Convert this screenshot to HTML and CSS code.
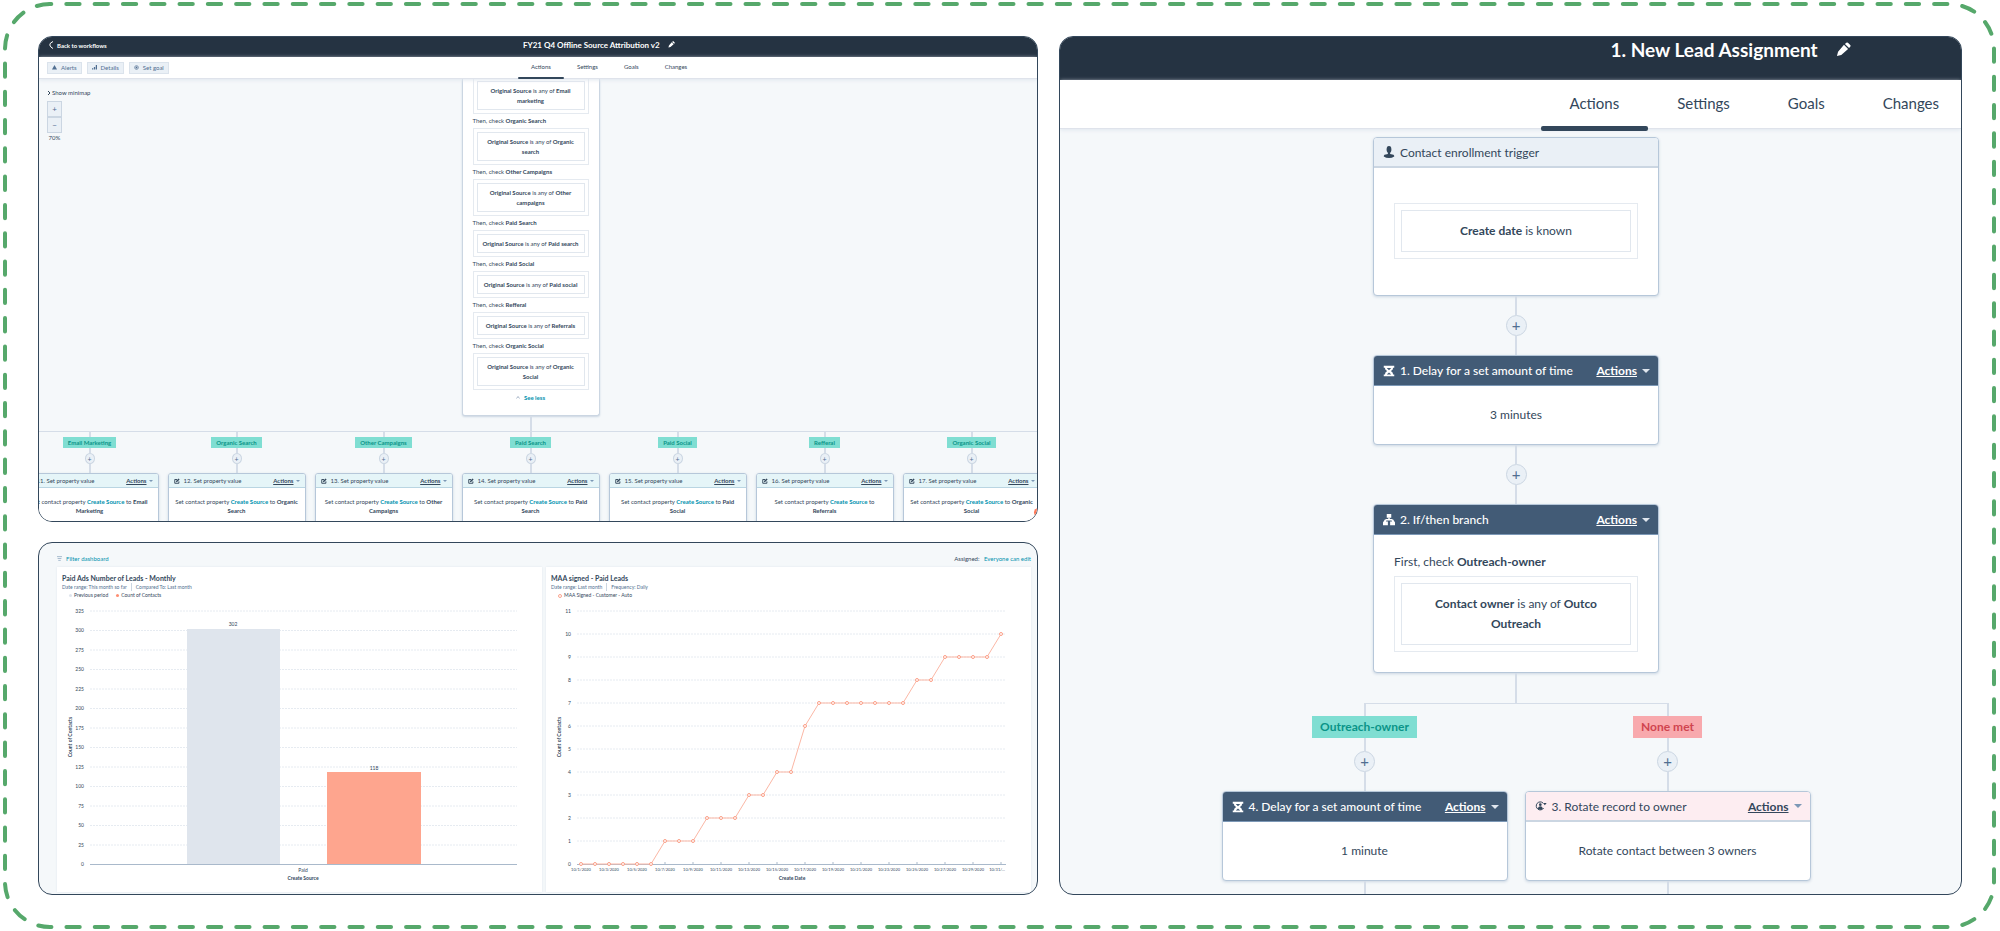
FILE: index.html
```html
<!DOCTYPE html>
<html lang="en">
<head>
<meta charset="utf-8">
<title>Workflow and dashboard overview</title>
<link rel="stylesheet" href="styles.css">
</head>
<body>
<svg class="frame" aria-hidden="true"><rect x="5" y="4" rx="45" ry="45"/></svg>

<svg class="defs" aria-hidden="true">
  <symbol id="pencil" viewBox="0 0 16 16"><path d="M1 15l1.200-4.600L8.500 3l4.400 4.400-7.300 6.400zM9.500 2L11 .8q.8-.8 1.700 0l2.500 2.500q.8.9 0 1.700L13.900 6.400z"/></symbol>
  <symbol id="edit" viewBox="0 0 16 16"><path d="M13 9v5H2V4h6" fill="none" stroke="currentColor" stroke-width="2.500"/><path d="M5 11l1-4 6-6 3 3-6 6z"/></symbol>
  <symbol id="hourglass" viewBox="0 0 16 16"><path d="M1 1h14v2.500h-1.500Q13.500 6.500 10.500 8q3 1.500 3 4.500H15V15H1v-2.500h1.500q0-3 3-4.500-3-1.500-3-4.500H1z"/><path d="M5 4h6L8 7zM5 12.500L8 10l3 2.500z" fill="#425b76"/></symbol>
  <symbol id="branch" viewBox="0 0 16 16"><rect x="5" y="0" width="6" height="5"/><path d="M7 5h2v1.500h2.500q3 0 3.500 3.500 1 0 1 1.500V15H9.500v-5H12l-.5-1.500h-7L4 10h2.500v5H0v-3.500Q0 10 1 10q.5-3.500 3.500-3.500H7z"/></symbol>
  <symbol id="contact" viewBox="0 0 16 16"><ellipse cx="8" cy="4.500" rx="3.200" ry="4.500"/><path d="M6.500 8h3v2.500l4.500 1q1 .5 1 2.500-3 2-7 2t-7-2q0-2 1-2.500l4.500-1z"/></symbol>
  <symbol id="rotate" viewBox="0 0 18 16"><path d="M13 11a6 6 0 1 1-1-7.500" fill="none" stroke="currentColor" stroke-width="1.500"/><circle cx="8" cy="6" r="2"/><path d="M4.500 12.500q0-4 3.500-4t3.500 4q-3.500 2-7 0zM12 3.500h5.500L14.800 7z"/></symbol>
</svg>

<main class="board">
  <section class="panel flow-small">
    <header class="topbar">
      <a class="back" href="#"><svg viewBox="0 0 5 8"><path d="M4 .5Q.5 2 .8 4T4 7.500"/></svg>Back to workflows</a>
      <h1 class="title">FY21 Q4 Offline Source Attribution v2 <svg class="icon"><use href="#pencil"/></svg></h1>
    </header>
    <div class="toolbar">
      <div class="tools">
        <button><svg viewBox="0 0 8 8"><path d="M4 0l4 7H0z"/></svg>Alerts</button>
        <button><svg viewBox="0 0 8 8"><path d="M0 7V5h2v2zM3 7V3h2v4zM6 7V0h2v7z"/></svg>Details</button>
        <button><svg viewBox="0 0 8 8"><circle cx="4" cy="4" r="3" fill="none" stroke="currentColor"/><circle cx="4" cy="4" r="1.500"/></svg>Set goal</button>
      </div>
      <nav class="tabs"><a class="on" href="#">Actions</a><a href="#">Settings</a><a href="#">Goals</a><a href="#">Changes</a></nav>
    </div>
    <div class="canvas">
      <div class="mapctl">
        <a class="minimap" href="#"><svg viewBox="0 0 4 6"><path d="M1 1l2 2-2 2"/></svg>Show minimap</a>
        <button aria-label="Zoom in">+</button><button aria-label="Zoom out">−</button>
        <span class="pct">70%</span>
      </div>
      <article class="checks">
        <div class="box cut"><p><b>Original Source</b> is any of <b>Email marketing</b></p></div>
        <h2>Then, check <b>Organic Search</b></h2>
        <div class="box"><p><b>Original Source</b> is any of <b>Organic search</b></p></div>
        <h2>Then, check <b>Other Campaigns</b></h2>
        <div class="box"><p><b>Original Source</b> is any of <b>Other campaigns</b></p></div>
        <h2>Then, check <b>Paid Search</b></h2>
        <div class="box"><p><b>Original Source</b> is any of <b>Paid search</b></p></div>
        <h2>Then, check <b>Paid Social</b></h2>
        <div class="box"><p><b>Original Source</b> is any of <b>Paid social</b></p></div>
        <h2>Then, check <b>Refferal</b></h2>
        <div class="box"><p><b>Original Source</b> is any of <b>Referrals</b></p></div>
        <h2>Then, check <b>Organic Social</b></h2>
        <div class="box"><p><b>Original Source</b> is any of <b>Organic<br>Social</b></p></div>
        <a class="less" href="#"><svg viewBox="0 0 8 6"><path d="M1 5l3-4 3 4"/></svg>See less</a>
      </article>
      <div class="stem"></div>
      <div class="rail"></div>
      <div class="branches">
        <div class="branch"><i></i><span class="tag">Email Marketing</span><i></i><button class="plus" aria-label="Add action">+</button><i class="long"></i>
          <article class="step"><header><svg class="icon"><use href="#edit"/></svg><span>11. Set property value</span><button>Actions</button></header><p>Set contact property <a href="#">Create Source</a> to <b>Email<br>Marketing</b></p></article></div>
        <div class="branch"><i></i><span class="tag">Organic Search</span><i></i><button class="plus" aria-label="Add action">+</button><i class="long"></i>
          <article class="step"><header><svg class="icon"><use href="#edit"/></svg><span>12. Set property value</span><button>Actions</button></header><p>Set contact property <a href="#">Create Source</a> to <b>Organic<br>Search</b></p></article></div>
        <div class="branch"><i></i><span class="tag">Other Campaigns</span><i></i><button class="plus" aria-label="Add action">+</button><i class="long"></i>
          <article class="step"><header><svg class="icon"><use href="#edit"/></svg><span>13. Set property value</span><button>Actions</button></header><p>Set contact property <a href="#">Create Source</a> to <b>Other<br>Campaigns</b></p></article></div>
        <div class="branch"><i></i><span class="tag">Paid Search</span><i></i><button class="plus" aria-label="Add action">+</button><i class="long"></i>
          <article class="step"><header><svg class="icon"><use href="#edit"/></svg><span>14. Set property value</span><button>Actions</button></header><p>Set contact property <a href="#">Create Source</a> to <b>Paid<br>Search</b></p></article></div>
        <div class="branch"><i></i><span class="tag">Paid Social</span><i></i><button class="plus" aria-label="Add action">+</button><i class="long"></i>
          <article class="step"><header><svg class="icon"><use href="#edit"/></svg><span>15. Set property value</span><button>Actions</button></header><p>Set contact property <a href="#">Create Source</a> to <b>Paid<br>Social</b></p></article></div>
        <div class="branch"><i></i><span class="tag">Refferal</span><i></i><button class="plus" aria-label="Add action">+</button><i class="long"></i>
          <article class="step"><header><svg class="icon"><use href="#edit"/></svg><span>16. Set property value</span><button>Actions</button></header><p>Set contact property <a href="#">Create Source</a> to<br><b>Referrals</b></p></article></div>
        <div class="branch"><i></i><span class="tag">Organic Social</span><i></i><button class="plus" aria-label="Add action">+</button><i class="long"></i>
          <article class="step"><header><svg class="icon"><use href="#edit"/></svg><span>17. Set property value</span><button>Actions</button></header><p>Set contact property <a href="#">Create Source</a> to <b>Organic<br>Social</b></p></article></div>
      </div>
      <button class="help" aria-label="Help"></button>
    </div>
  </section>

  <section class="panel dashboard">
    <div class="dashbar">
      <a href="#"><svg viewBox="0 0 8 8"><path d="M0 1h8M1 4h6M2 7h4"/></svg>Filter dashboard</a>
      <span>Assigned: <a href="#">Everyone can edit</a></span>
    </div>
    <div class="reports">
      <article class="report">
        <h2>Paid Ads Number of Leads - Monthly</h2>
        <p class="meta"><span>Date range: This month so far</span><span>Compared To: Last month</span></p>
        <p class="legend"><span class="dot grey">Previous period</span><span class="dot coral">Count of Contacts</span></p>
        <svg class="chart" viewBox="0 0 485 290" role="img" aria-label="Count of contacts by create source">
          <path class="grid" d="M33 11H460M33 30.500H460M33 50H460M33 69.500H460M33 89H460M33 108.500H460M33 128H460M33 147.500H460M33 167H460M33 186.500H460M33 206H460M33 225.500H460M33 245H460"/>
          <rect x="130" y="29" width="93" height="235" fill="#dfe5ed"/>
          <rect x="270" y="172" width="94" height="92" fill="#fea58e"/>
          <path class="axis" d="M33 264.500H460"/>
          <g class="ylab"><text x="27" y="13">325</text><text x="27" y="32">300</text><text x="27" y="52">275</text><text x="27" y="71">250</text><text x="27" y="91">225</text><text x="27" y="110">200</text><text x="27" y="130">175</text><text x="27" y="149">150</text><text x="27" y="169">125</text><text x="27" y="188">100</text><text x="27" y="208">75</text><text x="27" y="227">50</text><text x="27" y="247">25</text><text x="27" y="266">0</text></g>
          <g class="mid"><text x="176" y="26">302</text><text x="317" y="170">118</text><text x="246" y="272">Paid</text><text class="name" x="246" y="280">Create Source</text><text class="name" transform="translate(15 137) rotate(-90)">Count of Contacts</text></g>
        </svg>
      </article>
      <article class="report">
        <h2>MAA signed - Paid Leads</h2>
        <p class="meta"><span>Date range: Last month</span><span>Frequency: Daily</span></p>
        <p class="legend"><span class="dot ring">MAA Signed - Customer - Auto</span></p>
        <svg class="chart" viewBox="0 0 485 290" role="img" aria-label="Count of contacts by create date">
          <defs><marker id="pt" markerUnits="userSpaceOnUse" markerWidth="6" markerHeight="6" refX="3" refY="3"><circle cx="3" cy="3" r="1.500" fill="#fff" stroke="#fb9f87"/></marker></defs>
          <path class="grid" d="M31 11H460M31 34H460M31 57H460M31 80H460M31 103H460M31 126H460M31 149H460M31 172H460M31 195H460M31 218H460M31 241H460"/>
          <path class="axis" d="M31 264.500H460M63 264v-2M91 264v-2M119 264v-2M147 264v-2M175 264v-2M203 264v-2M231 264v-2M259 264v-2M287 264v-2M315 264v-2M343 264v-2M371 264v-2M399 264v-2M427 264v-2M455 264v-2"/>
          <polyline class="line" points="35,264 49,264 63,264 77,264 91,264 105,264 119,241 133,241 147,241 161,218 175,218 189,218 203,195 217,195 231,172 245,172 259,126 273,103 287,103 301,103 315,103 329,103 343,103 357,103 371,80 385,80 399,57 413,57 427,57 441,57 455,34"/>
          <g class="ylab"><text x="25" y="13">11</text><text x="25" y="36">10</text><text x="25" y="59">9</text><text x="25" y="82">8</text><text x="25" y="105">7</text><text x="25" y="128">6</text><text x="25" y="151">5</text><text x="25" y="174">4</text><text x="25" y="197">3</text><text x="25" y="220">2</text><text x="25" y="243">1</text><text x="25" y="266">0</text></g>
          <g class="mid date"><text x="35" y="271">10/1/2020</text><text x="63" y="271">10/3/2020</text><text x="91" y="271">10/5/2020</text><text x="119" y="271">10/7/2020</text><text x="147" y="271">10/9/2020</text><text x="175" y="271">10/11/2020</text><text x="203" y="271">10/13/2020</text><text x="231" y="271">10/15/2020</text><text x="259" y="271">10/17/2020</text><text x="287" y="271">10/19/2020</text><text x="315" y="271">10/21/2020</text><text x="343" y="271">10/23/2020</text><text x="371" y="271">10/25/2020</text><text x="399" y="271">10/27/2020</text><text x="427" y="271">10/29/2020</text><text x="451" y="271">10/31/...</text></g>
          <g class="mid"><text class="name" x="246" y="280">Create Date</text><text class="name" transform="translate(15 137) rotate(-90)">Count of Contacts</text></g>
        </svg>
      </article>
    </div>
  </section>

  <section class="panel flow-large">
    <header class="topbar"><h1 class="title">1. New Lead Assignment <svg class="icon"><use href="#pencil"/></svg></h1></header>
    <div class="toolbar"><nav class="tabs"><a class="on" href="#">Actions</a><a href="#">Settings</a><a href="#">Goals</a><a href="#">Changes</a></nav></div>
    <div class="canvas">
      <article class="step trigger"><header><svg class="icon"><use href="#contact"/></svg><span>Contact enrollment trigger</span></header>
        <div class="box"><p><b>Create date</b> is known</p></div></article>
      <i class="long"></i><button class="plus" aria-label="Add action">+</button><i class="long"></i>
      <article class="step dark"><header><svg class="icon"><use href="#hourglass"/></svg><span>1. Delay for a set amount of time</span><button>Actions</button></header><p>3 minutes</p></article>
      <i class="long"></i><button class="plus" aria-label="Add action">+</button><i class="long"></i>
      <article class="step dark cond"><header><svg class="icon"><use href="#branch"/></svg><span>2. If/then branch</span><button>Actions</button></header>
        <h2>First, check <b>Outreach-owner</b></h2>
        <div class="box"><p><b>Contact owner</b> is any of <b>Outco Outreach</b></p></div></article>
      <div class="stem"></div>
      <div class="rail"></div>
      <div class="branches">
        <div class="branch"><i></i><span class="tag">Outreach-owner</span><i></i><button class="plus" aria-label="Add action">+</button><i class="long"></i>
          <article class="step dark"><header><svg class="icon"><use href="#hourglass"/></svg><span>4. Delay for a set amount of time</span><button>Actions</button></header><p>1 minute</p></article><i class="long"></i></div>
        <div class="branch"><i></i><span class="tag red">None met</span><i></i><button class="plus" aria-label="Add action">+</button><i class="long"></i>
          <article class="step pink"><header><svg class="icon"><use href="#rotate"/></svg><span>3. Rotate record to owner</span><button>Actions</button></header><p>Rotate contact between 3 owners</p></article><i class="long"></i></div>
      </div>
    </div>
  </section>
</main>
</body>
</html>
```
FILE: styles.css
```css
*, *::before, *::after { box-sizing: border-box; }
body, h1, h2, p { margin: 0; }
body { background: #fff; color: #33475b; font-family: Lato, "Open Sans", sans-serif; }
button { font: inherit; color: inherit; padding: 0; margin: 0; border: 0; background: none; cursor: pointer; }
a { color: inherit; text-decoration: none; }
b { font-weight: 700; }
svg { fill: currentColor; }
.defs { position: absolute; width: 0; height: 0; }

.frame { position: absolute; inset: 0; width: 100%; height: 100%; pointer-events: none; }
.frame rect { width: calc(100% - 11px); height: calc(100% - 8px); fill: none; stroke: #56a86b; stroke-width: 4; stroke-linecap: round; stroke-dasharray: 13.3 15; stroke-dashoffset: 12; }

.board { height: 100vh; padding: 36px 38px; display: grid; grid-template-columns: 1000fr 903fr; grid-template-rows: 486fr 353fr; gap: 20px 21px; }
.panel { border: 1px solid #33475b; border-radius: 14px; overflow: hidden; background: #f5f8fa; display: flex; flex-direction: column; min-width: 0; min-height: 0; }
.flow-large { grid-column: 2; grid-row: 1 / 3; }

/* Workflow editor */
.topbar { background: #253342; color: #fff; display: grid; flex: none; }
.title { font-weight: 700; white-space: nowrap; }
.toolbar { background: #fff; display: grid; flex: none; border-bottom: 1px solid #dfe3eb; box-shadow: 0 1px 4px #dfe6ee; position: relative; z-index: 1; }
.tabs { display: flex; }
.tabs .on { position: relative; }
.tabs .on::after { content: ""; position: absolute; left: 0; right: 0; background: #33475b; border-radius: 2px; }
.canvas { flex: 1; min-height: 0; overflow: hidden; display: flex; flex-direction: column; align-items: center; position: relative; }
.canvas > *, .branch > * { flex: none; }
i, .stem { background: #d5dde8; }
.branches { display: flex; }
.branch { flex: none; display: flex; flex-direction: column; align-items: center; }
.tag { background: #7fded2; color: #0a9488; font-weight: 700; white-space: nowrap; }
.tag.red { background: #f8a9ad; color: #d0444f; }
.plus { border: 1px solid #cbd6e2; border-radius: 50%; background: #eaf0f6; color: #506e91; display: grid; place-items: center; }
.step { background: #fff; border: 1px solid #b6c7d9; box-shadow: 0 1px 3px #cbd6e2; text-align: center; overflow: hidden; }
.step header { display: flex; align-items: center; text-align: left; background: #e5f5f8; border-bottom: 1px solid #b9d5e2; white-space: nowrap; }
.step header span { flex: 1; }
.step header button { display: flex; align-items: center; font-weight: 700; text-decoration: underline; }
.step header button::after { content: ""; border: solid transparent; border-bottom: 0; border-top-color: #7c98b6; }
.box { border: 1px solid #e5eaf0; }
.box p { border: 1px solid #e1e7ee; text-align: center; }

.flow-small { font-size: 6px; }
.flow-small .topbar { height: 20px; grid-template-columns: calc(50% - 15px) auto; padding-bottom: 4px; align-items: center; }
.flow-small .title { font-size: 8px; }
.flow-small .title .icon { width: 7px; height: 7px; margin-left: 6px; }
.back { font-weight: 700; padding-left: 10px; display: flex; align-items: center; gap: 3px; }
.back svg { width: 5px; height: 8px; fill: none; stroke: currentColor; }
.flow-small .toolbar { height: 22px; grid-template-columns: calc(50% - 20px) auto; }
.tools { display: flex; align-items: center; gap: 5px; padding-left: 8px; }
.tools button { height: 12px; padding: 0 4px; border: 1px solid #dbe3ec; background: #eaf0f6; color: #506e91; display: flex; align-items: center; gap: 4px; }
.tools svg { width: 5px; height: 5px; }
.flow-small .tabs a { padding: 0 13px; line-height: 20px; }
.flow-small .tabs .on::after { height: 2px; bottom: -1px; }
.flow-small .canvas { padding-right: 15px; }
.mapctl { position: absolute; left: 8px; top: 9px; display: flex; flex-direction: column; align-items: flex-start; }
.minimap { line-height: 10px; margin-bottom: 3px; display: flex; align-items: center; gap: 1px; }
.minimap svg { width: 4px; height: 6px; fill: none; stroke: currentColor; }
.mapctl button { width: 15px; height: 16px; border: 1px solid #cbd6e2; background: #eaf0f6; color: #506e91; font-size: 8px; line-height: 13px; }
.pct { line-height: 10px; width: 15px; text-align: center; }
.checks { width: 138px; padding: 0 10px; height: 337px; background: #fff; border: 1px solid #cbd6e2; border-top: 0; border-radius: 0 0 3px 3px; box-shadow: 0 1px 2px #cbd6e2; }
.checks .box { padding: 3px; }
.checks .box.cut { border-top: 0; padding-top: 2px; }
.checks .box p { padding: 4px 3px 3px; line-height: 10px; }
.checks h2 { font-size: 6px; font-weight: 400; line-height: 14px; white-space: nowrap; }
.less { display: flex; align-items: center; justify-content: center; gap: 4px; line-height: 15px; color: #0091ae; font-weight: 700; }
.less svg { width: 4px; height: 3px; fill: none; stroke: #506e91; }
.flow-small .stem { width: 2px; height: 15px; }
.flow-small .rail { align-self: stretch; height: 1px; background: #d5dde8; margin-right: -15px; }
.flow-small .branches { gap: 9px; }
.flow-small .branch { width: 138px; }
.flow-small i { width: 2px; height: 5px; }
.flow-small i.long { height: 9px; }
.flow-small .tag { padding: 0 5px; line-height: 11px; }
.flow-small .plus { width: 10px; height: 11px; font-size: 7px; line-height: 8px; }
.flow-small .step { width: 138px; height: 80px; border-radius: 3px; }
.flow-small .step header { height: 14px; padding: 0 5px; gap: 4px; }
.flow-small .step .icon { width: 6px; height: 6px; }
.flow-small .step header button { gap: 2px; }
.flow-small .step header button::after { border-width: 2px; border-bottom: 0; }
.flow-small .step p { padding: 9px 2px; line-height: 9px; }
.step p a { color: #0091ae; font-weight: 700; }
.help { position: absolute; right: -6px; bottom: 4px; width: 9px; height: 9px; border-radius: 50%; background: #ff7a59; }

.flow-large { font-size: 12px; }
.flow-large .topbar { height: 43px; padding-left: calc(50% + 100px); align-items: start; }
.flow-large .title { font-size: 19px; line-height: 26px; }
.flow-large .title .icon { width: 15px; height: 15px; margin-left: 14px; }
.flow-large .toolbar { height: 49px; padding-left: calc(50% + 30px); }
.flow-large .tabs a { padding: 0 29px; font-size: 15px; line-height: 46px; }
.flow-large .tabs .on::after { height: 5px; bottom: -3px; }
.flow-large .canvas { padding: 8px 0 0 11px; }
.flow-large .step { width: 286px; border-radius: 4px; flex: none; }
.flow-large .step header { height: 30px; padding: 0 8px 0 9px; gap: 5px; }
.flow-large .step .icon { width: 12px; height: 12px; }
.flow-large .step header button { gap: 5px; }
.flow-large .step header button::after { border-width: 4px; border-bottom: 0; }
.flow-large .step > p { line-height: 58px; }
.flow-large .dark header { background: #425b76; color: #fff; border-color: #7c98b6; font-weight: 500; }
.flow-large .dark header button::after { border-top-color: #dfe6ee; }
.flow-large .pink header { background: #fdedf1; border-bottom: 2px solid #cbd6e2; }
.flow-large .trigger header { background: #eaf0f6; border-bottom: 2px solid #cbd6e2; }
.flow-large .box { margin: 0 20px; padding: 6px; }
.flow-large .box p { line-height: 20px; padding: 10px 20px; }
.flow-large .trigger .box { margin: 35px 20px 36px; }
.flow-large .trigger .box p { padding: 10px 0; }
.flow-large .cond { padding-bottom: 20px; }
.flow-large .cond h2 { font-size: 12px; font-weight: 400; text-align: left; line-height: 20px; padding: 17px 20px 4px; }
.flow-large i { width: 2px; height: 12px; }
.flow-large .tag + i { height: 13px; }
.flow-large i.long { height: 19px; }
.flow-large .plus { width: 21px; height: 21px; font-size: 15px; line-height: 15px; }
.flow-large .stem { width: 2px; height: 30px; }
.flow-large .rail { width: 305px; height: 1px; background: #d5dde8; }
.flow-large .branches { gap: 17px; }
.flow-large .tag { line-height: 22px; padding: 0 8px; }

/* Dashboard */
.dashboard { font-size: 6px; padding: 11px 6px 2px 18px; }
.dashbar { display: flex; justify-content: space-between; line-height: 10px; padding-bottom: 3px; }
.dashbar a { color: #0091ae; }
.dashbar span a { margin-left: 3px; }
.dashbar svg { width: 5px; height: 5px; margin-right: 4px; stroke: #7c98b6; fill: none; }
.reports { flex: 1; display: grid; grid-template-columns: 1fr 1fr; gap: 4px; min-height: 0; }
.report { background: #fff; box-shadow: 0 0 2px #dfe6ee; padding: 6px 0 0; min-width: 0; overflow: hidden; }
.report h2 { font-size: 7px; line-height: 10px; padding-left: 5px; }
.meta { font-size: 5px; line-height: 8px; padding-left: 5px; display: flex; color: #516f90; }
.meta span + span { border-left: 1px solid #cbd6e2; margin-left: 4px; padding-left: 4px; }
.legend { font-size: 5px; line-height: 9px; padding-left: 12px; display: flex; gap: 8px; }
.dot { display: flex; align-items: center; gap: 2px; }
.dot::before { content: ""; width: 3px; height: 3px; border-radius: 50%; background: #dfe5ed; }
.coral::before { background: #fe8e72; }
.ring::before { background: #fff; border: 1px solid #fba58f; width: 4px; height: 4px; }
.chart { display: block; width: 100%; }
.chart text { font-size: 5px; fill: #33475b; }
.chart .date text { font-size: 4px; }
.chart .name { font-weight: 700; }
.grid { stroke: #e6ebf1; stroke-dasharray: 2 1; fill: none; }
.axis { stroke: #a9b9cb; fill: none; }
.line { fill: none; stroke: #fbb7a5; marker: url(#pt); }
.ylab { text-anchor: end; }
.mid { text-anchor: middle; }
```
